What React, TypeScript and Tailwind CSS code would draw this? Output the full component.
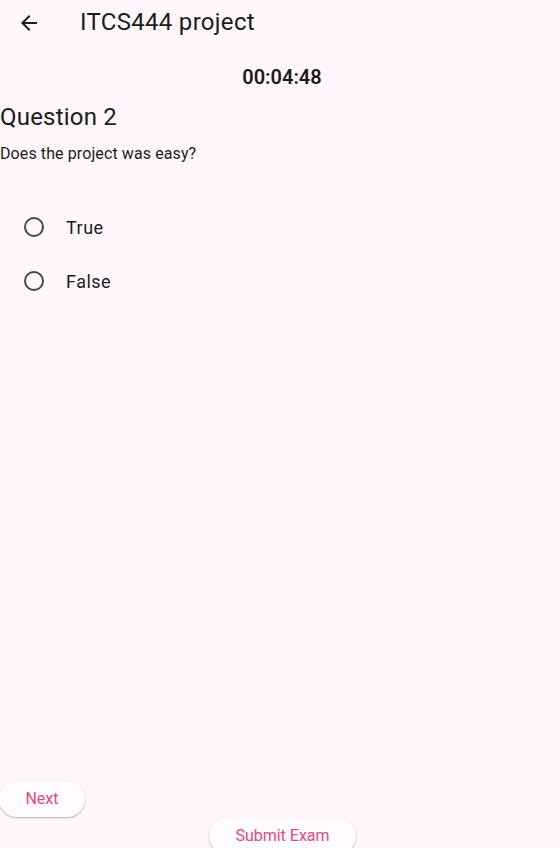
import React, { useState } from 'react';

const options = ['True', 'False'];

const App: React.FC = () => {
  const [selected, setSelected] = useState<string | null>(null);

  return (
    <div
      className="w-full h-[848px] overflow-hidden bg-[#FDF7FC] text-[#1D1B20] flex flex-col"
      style={{ fontFamily: 'Roboto, "Noto Sans", sans-serif' }}
    >
      <header className="h-[44px] flex items-center shrink-0">
        <button className="ml-[17px] w-[24px] h-[24px] mt-[2px] flex items-center justify-center text-[#1D1B20]">
          <svg viewBox="0 0 24 24" className="w-[26px] h-[26px]" fill="currentColor">
            <path d="M20 11H7.83l5.59-5.59L12 4l-8 8 8 8 1.41-1.41L7.83 13H20v-2z" />
          </svg>
        </button>
        <h1 className="ml-[39px] text-[24px] leading-none font-normal tracking-[0.3px]">ITCS444 project</h1>
      </header>

      <div className="mt-[21px] flex justify-center pl-[4px]">
        <span className="text-[20px] leading-[24px] font-semibold">00:04:48</span>
      </div>

      <h2 className="mt-[13px] text-[24px] leading-[30px] font-normal tracking-[0.2px]">Question 2</h2>
      <p className="mt-[12px] text-[16px] leading-[20px] tracking-[0.1px]">Does the project was easy?</p>

      <div className="mt-[36px] flex flex-col">
        {options.map((opt) => (
          <label
            key={opt}
            className="h-[54px] flex items-center cursor-pointer"
            onClick={() => setSelected(opt)}
          >
            <span className="ml-[24px] w-[20px] h-[20px] rounded-full border-2 border-[#49454F] flex items-center justify-center">
              {selected === opt && <span className="w-[10px] h-[10px] rounded-full bg-[#49454F]" />}
            </span>
            <span className="ml-[22px] text-[18px] tracking-[0.5px]">{opt}</span>
          </label>
        ))}
      </div>

      <div className="mt-auto flex flex-col">
        <button className="-ml-[1px] w-[86px] h-[36px] rounded-full bg-[#FFFBFE] text-[#E24A7E] text-[16px] shadow-[0_1px_2px_rgba(0,0,0,0.3)]">
          Next
        </button>
        <div className="mt-[1px] flex justify-center pl-[5px]">
          <button className="w-[147px] h-[36px] -mb-[6px] rounded-full bg-[#FFFBFE] text-[#E24A7E] text-[16px] shadow-[0_1px_2px_rgba(0,0,0,0.3)]">
            Submit Exam
          </button>
        </div>
      </div>
    </div>
  );
};

export default App;
